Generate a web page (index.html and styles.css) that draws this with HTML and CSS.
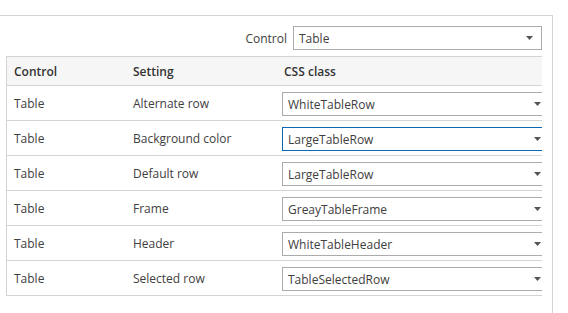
FILE: index.html
```html
<!DOCTYPE html>
<html lang="en">
<head>
<meta charset="utf-8">
<title>Control CSS classes</title>
<link rel="stylesheet" href="styles.css">
</head>
<body>
<div class="panel">
  <div class="filter">
    <span class="filter-label">Control</span>
    <div class="select select-filter">
      <span class="select-text">Table</span>
      <svg class="caret" width="7" height="4" viewBox="0 0 7 4"><path d="M0 0H7L3.5 4Z"/></svg>
    </div>
  </div>
  <div class="table-wrap">
    <table class="grid">
      <colgroup>
        <col class="c1"><col class="c2"><col class="c3">
      </colgroup>
      <thead>
        <tr><th>Control</th><th>Setting</th><th class="th-css">CSS class</th></tr>
      </thead>
      <tbody>
        <tr><td>Table</td><td>Alternate row</td><td class="td-sel"><div class="select"><span class="select-text">WhiteTableRow</span><svg class="caret" width="7" height="4" viewBox="0 0 7 4"><path d="M0 0H7L3.5 4Z"/></svg></div></td></tr>
        <tr><td>Table</td><td>Background color</td><td class="td-sel"><div class="select focused"><span class="select-text">LargeTableRow</span><svg class="caret" width="7" height="4" viewBox="0 0 7 4"><path d="M0 0H7L3.5 4Z"/></svg></div></td></tr>
        <tr><td>Table</td><td>Default row</td><td class="td-sel"><div class="select"><span class="select-text">LargeTableRow</span><svg class="caret" width="7" height="4" viewBox="0 0 7 4"><path d="M0 0H7L3.5 4Z"/></svg></div></td></tr>
        <tr><td>Table</td><td>Frame</td><td class="td-sel"><div class="select"><span class="select-text">GreayTableFrame</span><svg class="caret" width="7" height="4" viewBox="0 0 7 4"><path d="M0 0H7L3.5 4Z"/></svg></div></td></tr>
        <tr><td>Table</td><td>Header</td><td class="td-sel"><div class="select"><span class="select-text">WhiteTableHeader</span><svg class="caret" width="7" height="4" viewBox="0 0 7 4"><path d="M0 0H7L3.5 4Z"/></svg></div></td></tr>
        <tr><td>Table</td><td>Selected row</td><td class="td-sel"><div class="select"><span class="select-text">TableSelectedRow</span><svg class="caret" width="7" height="4" viewBox="0 0 7 4"><path d="M0 0H7L3.5 4Z"/></svg></div></td></tr>
      </tbody>
    </table>
  </div>
</div>
</body>
</html>
```
FILE: styles.css
```css
html, body {
  margin: 0;
  padding: 0;
  background: #ffffff;
}
body {
  font-family: "Open Sans", "Noto Sans", "Liberation Sans", sans-serif;
  font-size: 12px;
  color: #404040;
}
.panel {
  box-sizing: border-box;
  width: 553px;
  height: 298px;
  margin-top: 15px;
  border-top: 1px solid #d4d4d4;
  border-right: 1px solid #d4d4d4;
}
.filter {
  display: flex;
  justify-content: flex-end;
  align-items: center;
  gap: 6px;
  padding: 10px 10px 0 0;
}
.filter-label {
  color: #404040;
}
.select {
  box-sizing: border-box;
  height: 24px;
  display: flex;
  align-items: center;
  justify-content: space-between;
  padding: 0 8px 0 5px;
  border: 1px solid #ababab;
  background: #ffffff;
  color: #404040;
}
.select-filter {
  width: 249px;
}
.select.focused {
  border-color: #0e69b4;
}
.caret {
  display: block;
  fill: #555555;
}
.table-wrap {
  margin: 6px 0 0 6px;
  width: 536px;
  overflow: hidden;
}
.grid {
  border-collapse: separate;
  border-spacing: 0;
  table-layout: fixed;
  width: 560px;
  border-top: 1px solid #d4d4d4;
  border-left: 1px solid #d4d4d4;
}
.c1 { width: 119px; }
.c2 { width: 149px; }
.c3 { width: 292px; }
.grid th {
  height: 28px;
  padding: 0 0 0 7px;
  text-align: left;
  font-weight: 600;
  color: #333333;
  background: #f6f6f6;
  border-bottom: 1px solid #d4d4d4;
  vertical-align: middle;
}
.grid th.th-css {
  padding-left: 9px;
}
.grid td {
  height: 34px;
  box-sizing: border-box;
  padding: 0 0 0 7px;
  border-bottom: 1px solid #d4d4d4;
  vertical-align: middle;
  white-space: nowrap;
}
.grid td.td-sel {
  padding: 6px 10px 4px 7px;
}
.grid td.td-sel .select {
  width: 268px;
}
```
